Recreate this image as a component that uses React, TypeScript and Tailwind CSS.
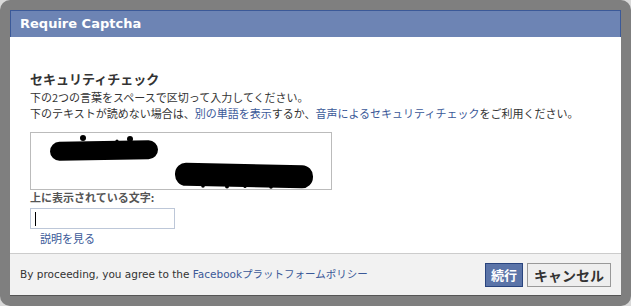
import React from 'react';

const jp = "font-['Noto_Sans_CJK_JP',sans-serif]";
const mixed = "font-['DejaVu_Sans','Noto_Sans_CJK_JP',sans-serif]";

function CaptchaImage() {
  return (
    <svg width="300" height="56" viewBox="0 0 300 56">
      {/* first word */}
      <rect x="19" y="8" width="108" height="19" rx="9.5" fill="#000" transform="rotate(-1 73 17)" />
      <circle cx="52" cy="5" r="3" fill="#000" />
      <circle cx="99" cy="6" r="3" fill="#000" />
      <circle cx="86" cy="8" r="1.6" fill="#000" />
      {/* second word */}
      <rect x="144" y="31" width="138" height="23" rx="11" fill="#000" transform="rotate(1.2 213 42)" />
      <circle cx="172" cy="53" r="1.8" fill="#000" />
      <circle cx="196" cy="53.5" r="2" fill="#000" />
      <circle cx="214" cy="53.5" r="1.6" fill="#000" />
      <circle cx="240" cy="54" r="1.8" fill="#000" />
    </svg>
  );
}

export default function App() {
  return (
    <div className="w-[631px] h-[306px] bg-[#d9d9d9]">
      <div className="h-full rounded-[10px] bg-[#7f7f7f] p-[10px]">
        <div className="h-full flex flex-col bg-white border-b border-[#555]">
          {/* ヘッダー */}
          <div className="h-[27px] shrink-0 bg-[#6d84b4] border border-[#3b5998] border-b-0 flex items-center pl-[9px]">
            <span className="text-white text-[13px] font-bold font-['DejaVu_Sans',sans-serif]">Require Captcha</span>
          </div>

          {/* 本文 */}
          <div className={`flex-1 px-5 pt-[34px] text-[#333] ${jp}`}>
            <h2 className="text-[13px] leading-4 font-bold">セキュリティチェック</h2>
            <p className="mt-[2px] text-[11px] leading-4">下の2つの言葉をスペースで区切って入力してください。</p>
            <p className="text-[11px] leading-4">
              下のテキストが読めない場合は、
              <a className="text-[#3b5998]">別の単語を表示</a>
              するか、
              <a className="text-[#3b5998]">音声によるセキュリティチェック</a>
              をご利用ください。
            </p>

            <div className="mt-[11px] w-[302px] h-[58px] border border-[#bbb]">
              <CaptchaImage />
            </div>

            <div className="text-[11px] leading-[14px] font-bold text-[#555]">上に表示されている文字:</div>
            <div className="mt-1 w-[145px] h-[21px] border border-[#bdc7d8] flex items-center pl-[4px]">
              <div className="w-px h-[14px] bg-black" />
            </div>
            <a className="block mt-[2px] ml-[10px] text-[11px] leading-[14px] text-[#3b5998]">説明を見る</a>
          </div>

          {/* フッター */}
          <div className={`h-[42px] shrink-0 bg-[#f2f2f2] border-t border-[#ccc] flex items-center justify-between pl-[10px] pr-[10px] ${mixed}`}>
            <span className="text-[10.5px] text-[#333]">
              By proceeding, you agree to the <a className="text-[#3b5998]">Facebookプラットフォームポリシー</a>
            </span>
            <div className={`flex gap-[4px] ${jp}`}>
              <button className="h-[24px] px-[5px] bg-[#5b74a8] border border-[#29447e] text-white text-[13px] font-bold leading-none">続行</button>
              <button className="h-[24px] px-[6px] bg-[#eeeeee] border border-[#999] text-[#333] text-[14px] font-bold leading-none">キャンセル</button>
            </div>
          </div>
        </div>
      </div>
    </div>
  );
}
